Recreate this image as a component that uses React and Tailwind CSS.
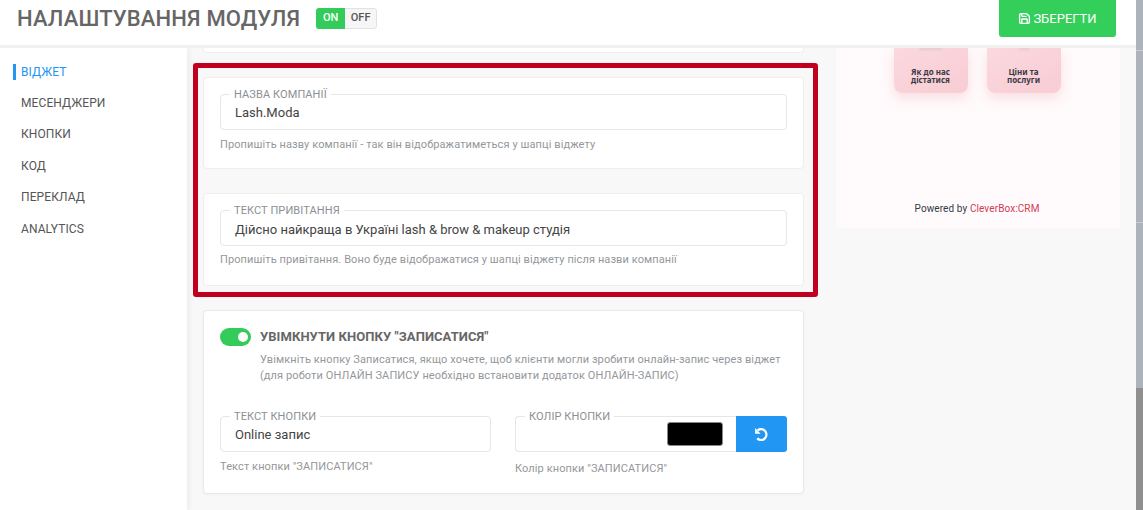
import { Save } from 'lucide-react'

const MENU = ['Віджет', 'Месенджери', 'Кнопки', 'Код', 'Переклад', 'Analytics']

const Field = ({ label, value, textClass = 'pt-[1px]' }) => (
  <div className={`relative h-[36px] border border-[#e6e6e6] rounded-[4px] bg-white pl-[14px] flex items-center text-[13px] text-[#444] ${textClass}`}>
    <span className="absolute left-[9px] top-[-7px] px-[4px] bg-white text-[11px] leading-[13px] uppercase text-[#8b8f94] tracking-[0.1px]">{label}</span>
    {value}
  </div>
)

const Hint = ({ children, className = '' }) => (
  <p className={`text-[11px] leading-[14px] text-[#94979b] tracking-[0.1px] ${className}`}>{children}</p>
)

const Tile = ({ children, mark }) => (
  <div className="w-[74px] h-[45px] rounded-b-[8px] bg-gradient-to-br from-[#fbd9df] to-[#f8ccd3] shadow-[0_5px_12px_rgba(240,170,180,0.35)] text-center font-['Noto_Sans',sans-serif] font-bold text-[8px] leading-[8px] text-[#3a3a44]">
    <div className={`mx-auto h-[2px] bg-[#e0c8d2] blur-[1px] mb-[18px] ${mark}`} />
    {children}
  </div>
)

const App = () => (
  <div className="h-[510px] w-[1143px] overflow-hidden flex font-['Roboto',sans-serif] bg-[#f8f8f8]">
    <div className="flex-1 flex flex-col min-w-0">
      <header className="h-[48px] shrink-0 bg-white border-b-[3px] border-[#f0f0f0] flex items-start relative z-10">
        <h1 className="ml-[17px] mt-[5px] text-[22px] leading-[28px] font-medium text-[#666] tracking-[0.15px]">НАЛАШТУВАННЯ МОДУЛЯ</h1>
        <div className="ml-[16px] mt-[8px] flex h-[21px] w-[61px] rounded-[3px] overflow-hidden text-[11px] font-medium">
          <span className="w-[29px] bg-[#33cc5a] text-white flex items-center justify-center">ON</span>
          <span className="flex-1 bg-[#f6f6f6] border border-l-0 border-[#e2e2e2] rounded-r-[3px] text-[#555] flex items-center justify-center">OFF</span>
        </div>
        <button className="ml-auto mr-[20px] w-[117px] h-[37px] bg-[#33cf5a] rounded-b-[3px] text-white text-[13px] flex items-center justify-center gap-[2px]">
          <Save size={13} strokeWidth={2.5} />
          ЗБЕРЕГТИ
        </button>
      </header>

      <div className="flex-1 flex min-h-0">
        <nav className="w-[187px] shrink-0 bg-white shadow-[2px_0_6px_rgba(0,0,0,0.05)] pt-[8px]">
          {MENU.map((m, i) => (
            <div key={m} className={`${i === 1 ? 'h-[31px]' : 'h-[31.5px]'} flex items-center relative pl-[21px] text-[12px] uppercase tracking-[0.1px] text-[#555]`}>
              {i === 0 && <span className="absolute left-[13px] top-[8px] h-[16px] w-[3px] bg-[#2196f3]" />}
              <span className={i === 0 ? 'text-[#2196f3]' : ''}>{m}</span>
            </div>
          ))}
        </nav>

        <main className="w-[633px] shrink-0 pl-[6px]">
          <div className="ml-[10px] w-[601px] h-[5px] bg-white border border-t-0 border-[#eeeeee] rounded-b-[4px]" />
          <section className="mt-[10px] w-[625px] h-[234px] border-[5px] border-[#c10020] rounded-[3px] pl-[5px] pt-[9px]">
            <div className="w-[601px] h-[92px] bg-white border border-[#eeeeee] rounded-[4px] pt-[16px] px-[16px]">
              <Field label="Назва компанії" value="Lash.Moda" />
              <Hint className="mt-[8px]">Пропишіть назву компанії - так він відображатиметься у шапці віджету</Hint>
            </div>
            <div className="mt-[24px] w-[601px] h-[93px] bg-white border border-[#eeeeee] rounded-[4px] pt-[16px] px-[16px]">
              <Field label="Текст привітання" value="Дійсно найкраща в Україні lash & brow & makeup студія" textClass="pt-[3px]" />
              <Hint className="mt-[7px]">Пропишіть привітання. Воно буде відображатися у шапці віджету після назви компанії</Hint>
            </div>
          </section>

          <section className="ml-[10px] mt-[13px] w-[601px] h-[184px] bg-white border border-[#e9e9e9] rounded-[4px] shadow-[0_1px_3px_rgba(0,0,0,0.04)] pt-[17px] px-[16px]">
            <div className="flex items-start gap-[9px]">
              <span className="w-[31px] h-[18px] shrink-0 rounded-full bg-[#33cc5a] flex items-center justify-end pr-[3px]">
                <span className="w-[10px] h-[10px] rounded-full bg-white" />
              </span>
              <div>
                <h3 className="text-[13px] leading-[18px] font-bold text-[#666] tracking-[0.06px]">УВІМКНУТИ КНОПКУ "ЗАПИСАТИСЯ"</h3>
                <Hint className="mt-[6px] !leading-[16px] whitespace-nowrap">
                  Увімкніть кнопку Записатися, якщо хочете, щоб клієнти могли зробити онлайн-запис через віджет
                  <br />
                  (для роботи ОНЛАЙН ЗАПИСУ необхідно встановити додаток ОНЛАЙН-ЗАПИС)
                </Hint>
              </div>
            </div>
            <div className="mt-[32px] flex gap-[24px]">
              <div className="w-[271px]">
                <Field label="Текст кнопки" value="Online запис" />
                <Hint className="mt-[8px]">Текст кнопки "ЗАПИСАТИСЯ"</Hint>
              </div>
              <div className="w-[272px]">
                <div className="flex">
                  <div className="relative flex-1 h-[36px] border border-r-0 border-[#e6e6e6] rounded-l-[4px] flex items-center justify-end pr-[13px]">
                    <span className="absolute left-[9px] top-[-7px] px-[4px] bg-white text-[11px] leading-[13px] uppercase text-[#8b8f94] tracking-[0.1px]">Колір кнопки</span>
                    <span className="w-[56px] h-[24px] bg-black rounded-[3px] border border-[#888]" />
                  </div>
                  <button className="w-[51px] h-[36px] bg-[#2196f3] rounded-r-[3px] flex items-center justify-center">
                    <svg width="15" height="15" viewBox="0 0 14 14" fill="none">
                      <path d="M3.4 3.2A5 5 0 1 1 3 10.6" stroke="white" strokeWidth="2.2" />
                      <path d="M1 1L6.2 6.2H1z" fill="white" />
                    </svg>
                  </button>
                </div>
                <Hint className="mt-[10px]">Колір кнопки "ЗАПИСАТИСЯ"</Hint>
              </div>
            </div>
          </section>
        </main>

        <aside className="ml-[16px] w-[284px] h-[180px] shrink-0 bg-[#fffafb] flex flex-col items-center">
          <div className="flex gap-[19px] -translate-x-[1px]">
            <Tile mark="w-[23px]">Як до нас<br />дістатися</Tile>
            <Tile mark="w-[10px]">Ціни та<br />послуги</Tile>
          </div>
          <p className="mt-[109px] text-[10px] leading-[14px] text-[#333a45] tracking-[0.1px] -translate-x-[1px]">
            Powered by <span className="text-[#d23a55]">CleverBox:CRM</span>
          </p>
        </aside>
      </div>
    </div>

    <div className="w-[7px] shrink-0 flex flex-col bg-[#8f8f8f]">
      <div className="h-[51px] bg-[#acb3ba] border-b border-[#c8cdd2]" />
      <div className="h-[172px] bg-[#acb3ba] border-b border-[#c8cdd2]" />
      <div className="h-[165px] bg-[#acb3ba]" />
    </div>
  </div>
)

export default App
